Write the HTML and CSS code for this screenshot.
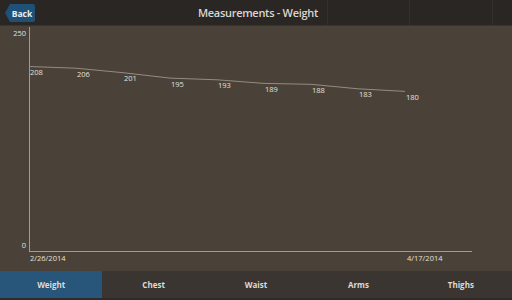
FILE: index.html
```html
<!DOCTYPE html>
<html lang="en">
<head>
  <meta charset="UTF-8">
  <meta name="viewport" content="width=device-width, initial-scale=1.0">
  <title>Measurements - Weight</title>
  <link rel="stylesheet" href="styles.css">
</head>
<body>
  <div class="app">
    <header class="topbar">
      <button class="back-btn">Back</button>
      <h1 class="title">Measurements - Weight</h1>
      <div class="dividers">
        <span></span><span></span><span></span>
      </div>
    </header>

    <main class="chart">
      <svg width="512" height="245" viewBox="0 0 512 245">
        <line class="axis" x1="29.5" y1="1" x2="29.5" y2="225.5"/>
        <line class="axis" x1="29" y1="225.5" x2="472" y2="225.5"/>
        <text class="tick" x="26" y="10" text-anchor="end">250</text>
        <text class="tick" x="26" y="222" text-anchor="end">0</text>
        <text class="tick" x="30" y="235">2/26/2014</text>
        <text class="tick" x="407" y="235">4/17/2014</text>
        <polyline id="line" class="data" points=""/>
        <g id="labels"></g>
      </svg>
    </main>

    <nav class="tabs">
      <div class="tab active">Weight</div>
      <div class="tab">Chest</div>
      <div class="tab">Waist</div>
      <div class="tab">Arms</div>
      <div class="tab">Thighs</div>
    </nav>
  </div>

  <script>
    const weights = [208, 206, 201, 195, 193, 189, 188, 183, 180];
    const line = document.getElementById('line');
    const labels = document.getElementById('labels');
    const ns = 'http://www.w3.org/2000/svg';
    const pts = [];

    weights.forEach((w, i) => {
      const x = 29 + i * 47;
      const y = 225 - w * 223 / 250 + 1;
      pts.push(x + ',' + y.toFixed(1));
      const t = document.createElementNS(ns, 'text');
      t.setAttribute('class', 'point');
      t.setAttribute('x', x + 1);
      t.setAttribute('y', (y + 8.5).toFixed(1));
      t.textContent = w;
      labels.appendChild(t);
    });
    line.setAttribute('points', pts.join(' '));
  </script>
</body>
</html>
```

FILE: styles.css
```css
body {
  margin: 0;
  background: #4a4238;
  font-family: "Open Sans", "Noto Sans", sans-serif;
  overflow: hidden;
}
.app {
  width: 512px;
  height: 300px;
  display: flex;
  flex-direction: column;
}
.topbar {
  position: relative;
  height: 25px;
  background: #2a2623;
  border-bottom: 1px solid #3a342e;
  display: flex;
  align-items: center;
  justify-content: center;
}
.back-btn {
  position: absolute;
  left: 5px;
  top: 4px;
  height: 18px;
  width: 30px;
  padding: 0 0 0 4px;
  border: none;
  background: #1f5078;
  color: #e8eef2;
  font-family: inherit;
  font-size: 8.5px;
  font-weight: 700;
  clip-path: polygon(5px 0, 100% 0, 100% 100%, 5px 100%, 0 50%);
  border-radius: 2px;
  z-index: 2;
}
.title {
  position: relative;
  z-index: 2;
  margin: 0 0 0 4px;
  font-size: 11px;
  font-weight: 600;
  letter-spacing: -0.3px;
  color: #d9d6d2;
}
.dividers span {
  position: absolute;
  top: 0;
  width: 1px;
  height: 25px;
  background: #34302b;
}
.dividers span:nth-child(1) { left: 327px; }
.dividers span:nth-child(2) { left: 409px; }
.dividers span:nth-child(3) { left: 492px; }
.chart {
  height: 245px;
}
.chart svg {
  display: block;
}
.axis {
  stroke: #a39a90;
  stroke-width: 1;
}
.data {
  fill: none;
  stroke: #958b81;
  stroke-width: 1;
}
.tick, .point {
  fill: #e4e0dc;
  font-size: 7.5px;
  font-family: "Open Sans", "Noto Sans", sans-serif;
}
.tabs {
  height: 27px;
  display: flex;
  background: #3a3531;
  border-bottom: 2px solid #2e2c2a;
}
.tab {
  flex: 1;
  display: flex;
  align-items: center;
  justify-content: center;
  color: #dedad6;
  font-size: 8px;
  font-weight: 700;
}
.tab.active {
  background: #27567a;
}
```
